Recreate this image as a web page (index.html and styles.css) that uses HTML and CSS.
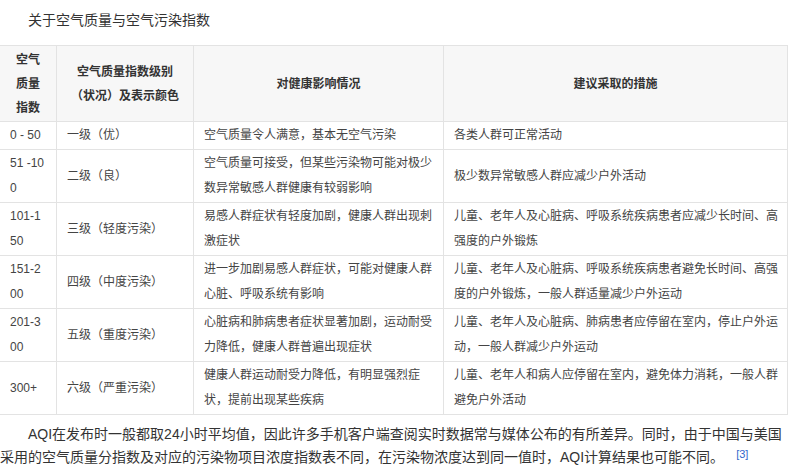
FILE: index.html
```html
<!DOCTYPE html>
<html lang="zh-CN">
<head>
<meta charset="utf-8">
<title>关于空气质量与空气污染指数</title>
<link rel="stylesheet" href="styles.css">
</head>
<body>
<p class="title">关于空气质量与空气污染指数</p>
<table class="aqi">
  <colgroup>
    <col class="c1"><col class="c2"><col class="c3"><col class="c4">
  </colgroup>
  <thead>
    <tr>
      <th>空气<br>质量<br>指数</th>
      <th>空气质量指数级别<br>（状况）及表示颜色</th>
      <th>对健康影响情况</th>
      <th>建议采取的措施</th>
    </tr>
  </thead>
  <tbody>
    <tr>
      <td class="num">0 - 50</td>
      <td>一级（优）</td>
      <td>空气质量令人满意，基本无空气污染</td>
      <td>各类人群可正常活动</td>
    </tr>
    <tr>
      <td class="num">51 -100</td>
      <td>二级（良）</td>
      <td>空气质量可接受，但某些污染物可能对极少数异常敏感人群健康有较弱影响</td>
      <td>极少数异常敏感人群应减少户外活动</td>
    </tr>
    <tr>
      <td class="num">101-150</td>
      <td>三级（轻度污染）</td>
      <td>易感人群症状有轻度加剧，健康人群出现刺激症状</td>
      <td>儿童、老年人及心脏病、呼吸系统疾病患者应减少长时间、高强度的户外锻炼</td>
    </tr>
    <tr>
      <td class="num">151-200</td>
      <td>四级（中度污染）</td>
      <td>进一步加剧易感人群症状，可能对健康人群心脏、呼吸系统有影响</td>
      <td>儿童、老年人及心脏病、呼吸系统疾病患者避免长时间、高强度的户外锻炼，一般人群适量减少户外运动</td>
    </tr>
    <tr>
      <td class="num">201-300</td>
      <td>五级（重度污染）</td>
      <td>心脏病和肺病患者症状显著加剧，运动耐受力降低，健康人群普遍出现症状</td>
      <td>儿童、老年人及心脏病、肺病患者应停留在室内，停止户外运动，一般人群减少户外运动</td>
    </tr>
    <tr>
      <td class="num">300+</td>
      <td>六级（严重污染）</td>
      <td>健康人群运动耐受力降低，有明显强烈症状，提前出现某些疾病</td>
      <td>儿童、老年人和病人应停留在室内，避免体力消耗，一般人群避免户外活动</td>
    </tr>
  </tbody>
</table>
<p class="para">AQI在发布时一般都取24小时平均值，因此许多手机客户端查阅实时数据常与媒体公布的有所差异。同时，由于中国与美国采用的空气质量分指数及对应的污染物项目浓度指数表不同，在污染物浓度达到同一值时，AQI计算结果也可能不同。<span class="ref">[3]</span></p>
</body>
</html>
```

FILE: styles.css
```css
html, body {
  margin: 0;
  padding: 0;
  background: #ffffff;
}

body {
  font-family: Arial, "Liberation Sans", "Noto Sans CJK SC", sans-serif;
  color: #333333;
  width: 794px;
  overflow: hidden;
}

.title {
  margin: 0;
  padding: 8px 0 13px;
  font-size: 14px;
  line-height: 24px;
  text-indent: 2em;
  color: #333333;
}

.aqi {
  border-collapse: collapse;
  table-layout: fixed;
  width: 788px;
  margin-left: -1px;
  font-size: 12px;
  word-break: break-all;
}

.c1 { width: 57px; }
.c2 { width: 137px; }
.c3 { width: 250px; }
.c4 { width: 344px; }

.aqi th,
.aqi td {
  border: 1px solid #e3e3e3;
  padding: 1px 8px 1px 10px;
  line-height: 25px;
  vertical-align: middle;
  text-align: left;
  font-weight: normal;
}

.aqi td.num {
  padding-right: 10px;
}

.aqi th {
  background: #f7f7f7;
  font-weight: bold;
  text-align: center;
  line-height: 24px;
  padding: 2px 4px 1px;
  color: #333333;
}

.aqi td {
  color: #444444;
}

.para {
  margin: 8px 0 0;
  font-size: 14px;
  line-height: 23px;
  text-indent: 2em;
  color: #333333;
}

.ref {
  display: inline-block;
  text-indent: 0;
  font-size: 11px;
  line-height: 11px;
  color: #3366cc;
  margin-left: 12px;
  vertical-align: 4px;
}
```
